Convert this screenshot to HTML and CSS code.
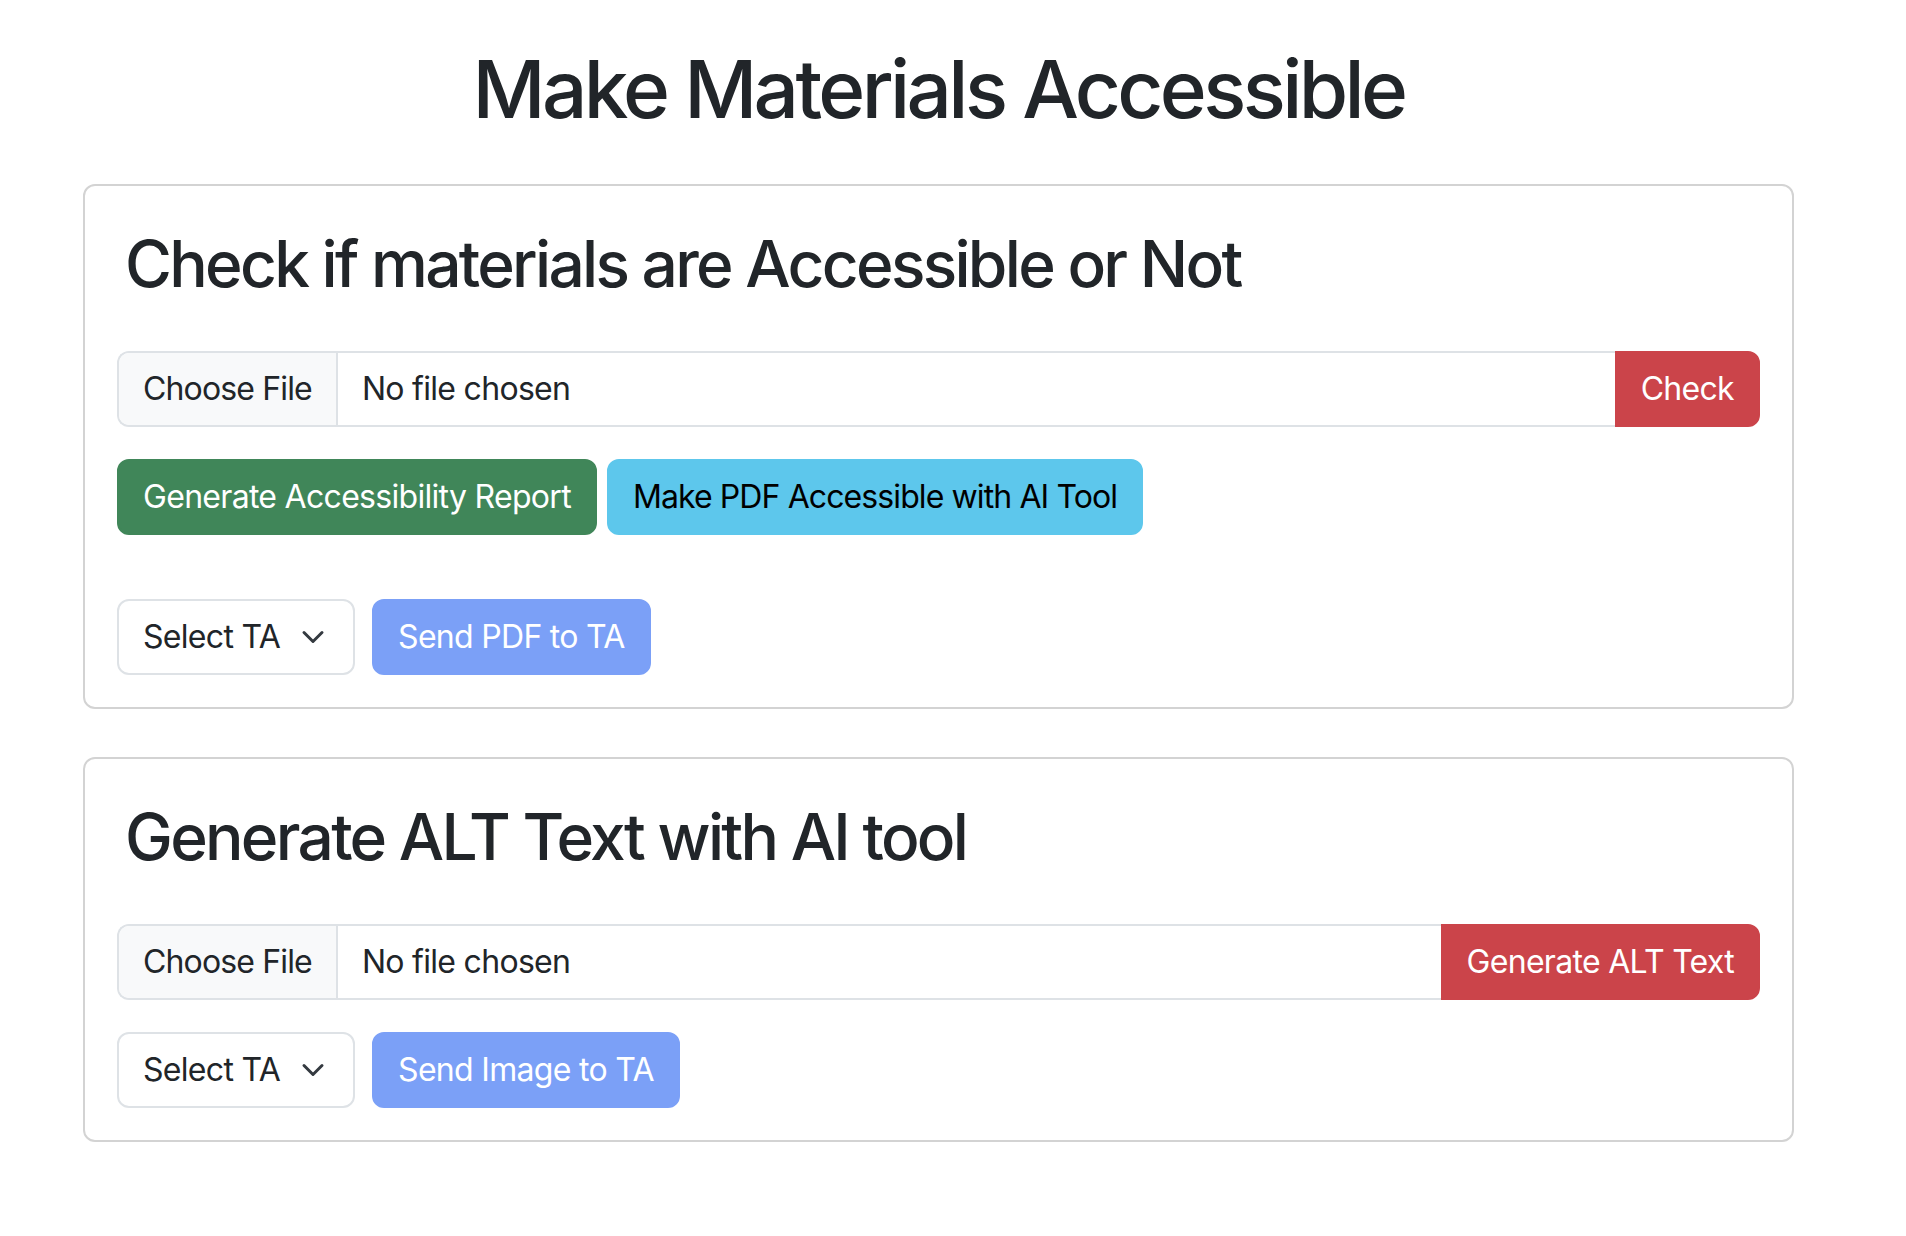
FILE: index.html
```html
<!DOCTYPE html>
<html lang="en">
<head>
<meta charset="utf-8">
<title>Make Materials Accessible</title>
<link rel="stylesheet" href="styles.css">
</head>
<body>
<div class="page">
  <h1 class="title">Make Materials Accessible</h1>

  <section class="card">
    <h2 class="card-title">Check if materials are Accessible or Not</h2>
    <div class="input-group">
      <div class="file-input">
        <span class="file-btn">Choose File</span>
        <span class="file-name">No file chosen</span>
      </div>
      <button class="btn btn-danger btn-append">Check</button>
    </div>
    <div class="btn-row">
      <button class="btn btn-success">Generate Accessibility Report</button>
      <button class="btn btn-info">Make PDF Accessible with AI Tool</button>
    </div>
    <div class="send-row send-row-far">
      <div class="select">
        <span>Select TA</span>
        <svg class="chevron" viewBox="0 0 16 16" width="32" height="24"><path d="m2 5 6 6 6-6" fill="none" stroke="#343a40" stroke-width="2" stroke-linecap="round" stroke-linejoin="round"/></svg>
      </div>
      <button class="btn btn-primary-disabled">Send PDF to TA</button>
    </div>
  </section>

  <section class="card card-second">
    <h2 class="card-title">Generate ALT Text with AI tool</h2>
    <div class="input-group">
      <div class="file-input">
        <span class="file-btn">Choose File</span>
        <span class="file-name">No file chosen</span>
      </div>
      <button class="btn btn-danger btn-append">Generate ALT Text</button>
    </div>
    <div class="send-row">
      <div class="select">
        <span>Select TA</span>
        <svg class="chevron" viewBox="0 0 16 16" width="32" height="24"><path d="m2 5 6 6 6-6" fill="none" stroke="#343a40" stroke-width="2" stroke-linecap="round" stroke-linejoin="round"/></svg>
      </div>
      <button class="btn btn-primary-disabled">Send Image to TA</button>
    </div>
  </section>
</div>
</body>
</html>
```

FILE: styles.css
```css
* { box-sizing: border-box; }

html, body {
  margin: 0;
  padding: 0;
  background: #ffffff;
}

body {
  font-family: Inter, "Noto Sans", "Liberation Sans", sans-serif;
  color: #212529;
  font-size: 32px;
  line-height: 1.5;
  letter-spacing: -0.7px;
}

.page {
  width: calc(100% - 29px);
  padding-top: 41px;
}

.title {
  margin: 0 0 47px;
  font-size: 80px;
  font-weight: 500;
  line-height: 1.2;
  letter-spacing: -3.6px;
  text-align: center;
  color: #212529;
}

.card {
  margin: 0 83px;
  border: 2px solid #d3d3d3;
  border-radius: 12px;
  padding: 32px;
}

.card-second {
  margin-top: 48px;
}

.card-title {
  margin: 8px 0 48px;
  padding-left: 8px;
  font-size: 64px;
  font-weight: 500;
  line-height: 1.2;
  letter-spacing: -2.7px;
  color: #212529;
}

.input-group {
  display: flex;
  align-items: stretch;
}

.file-input {
  flex: 1;
  display: flex;
  align-items: center;
  border: 2px solid #dee2e6;
  border-right: none;
  border-radius: 12px 0 0 12px;
  overflow: hidden;
  color: #212529;
}

.file-btn {
  padding: 12px 24px;
  background: #f8f9fa;
  border-right: 2px solid #dee2e6;
  letter-spacing: -0.85px;
}

.file-name {
  padding: 12px 24px;
}

.btn {
  font-family: inherit;
  font-size: 32px;
  line-height: 1.5;
  font-weight: 400;
  letter-spacing: -0.7px;
  padding: 12px 24px;
  border: 2px solid transparent;
  border-radius: 12px;
  cursor: pointer;
  white-space: nowrap;
}

.btn-append {
  border-radius: 0 12px 12px 0;
}

.btn-danger {
  background: #cb444a;
  border-color: #cb444a;
  color: #ffffff;
}

.btn-success {
  background: #408659;
  border-color: #408659;
  color: #ffffff;
}

.btn-info {
  background: #5dc7ec;
  border-color: #5dc7ec;
  color: #000000;
  letter-spacing: -0.9px;
}

.btn-primary-disabled {
  background: #7ba0f7;
  border-color: #7ba0f7;
  color: #ffffff;
}

.btn-row {
  display: flex;
  gap: 10px;
  margin-top: 32px;
}

.send-row {
  display: flex;
  gap: 17px;
  margin-top: 32px;
}

.send-row-far {
  margin-top: 64px;
}

.select {
  display: flex;
  align-items: center;
  gap: 17px;
  padding: 12px 24px;
  border: 2px solid #dee2e6;
  border-radius: 12px;
  color: #212529;
}

.chevron {
  display: block;
}
```
